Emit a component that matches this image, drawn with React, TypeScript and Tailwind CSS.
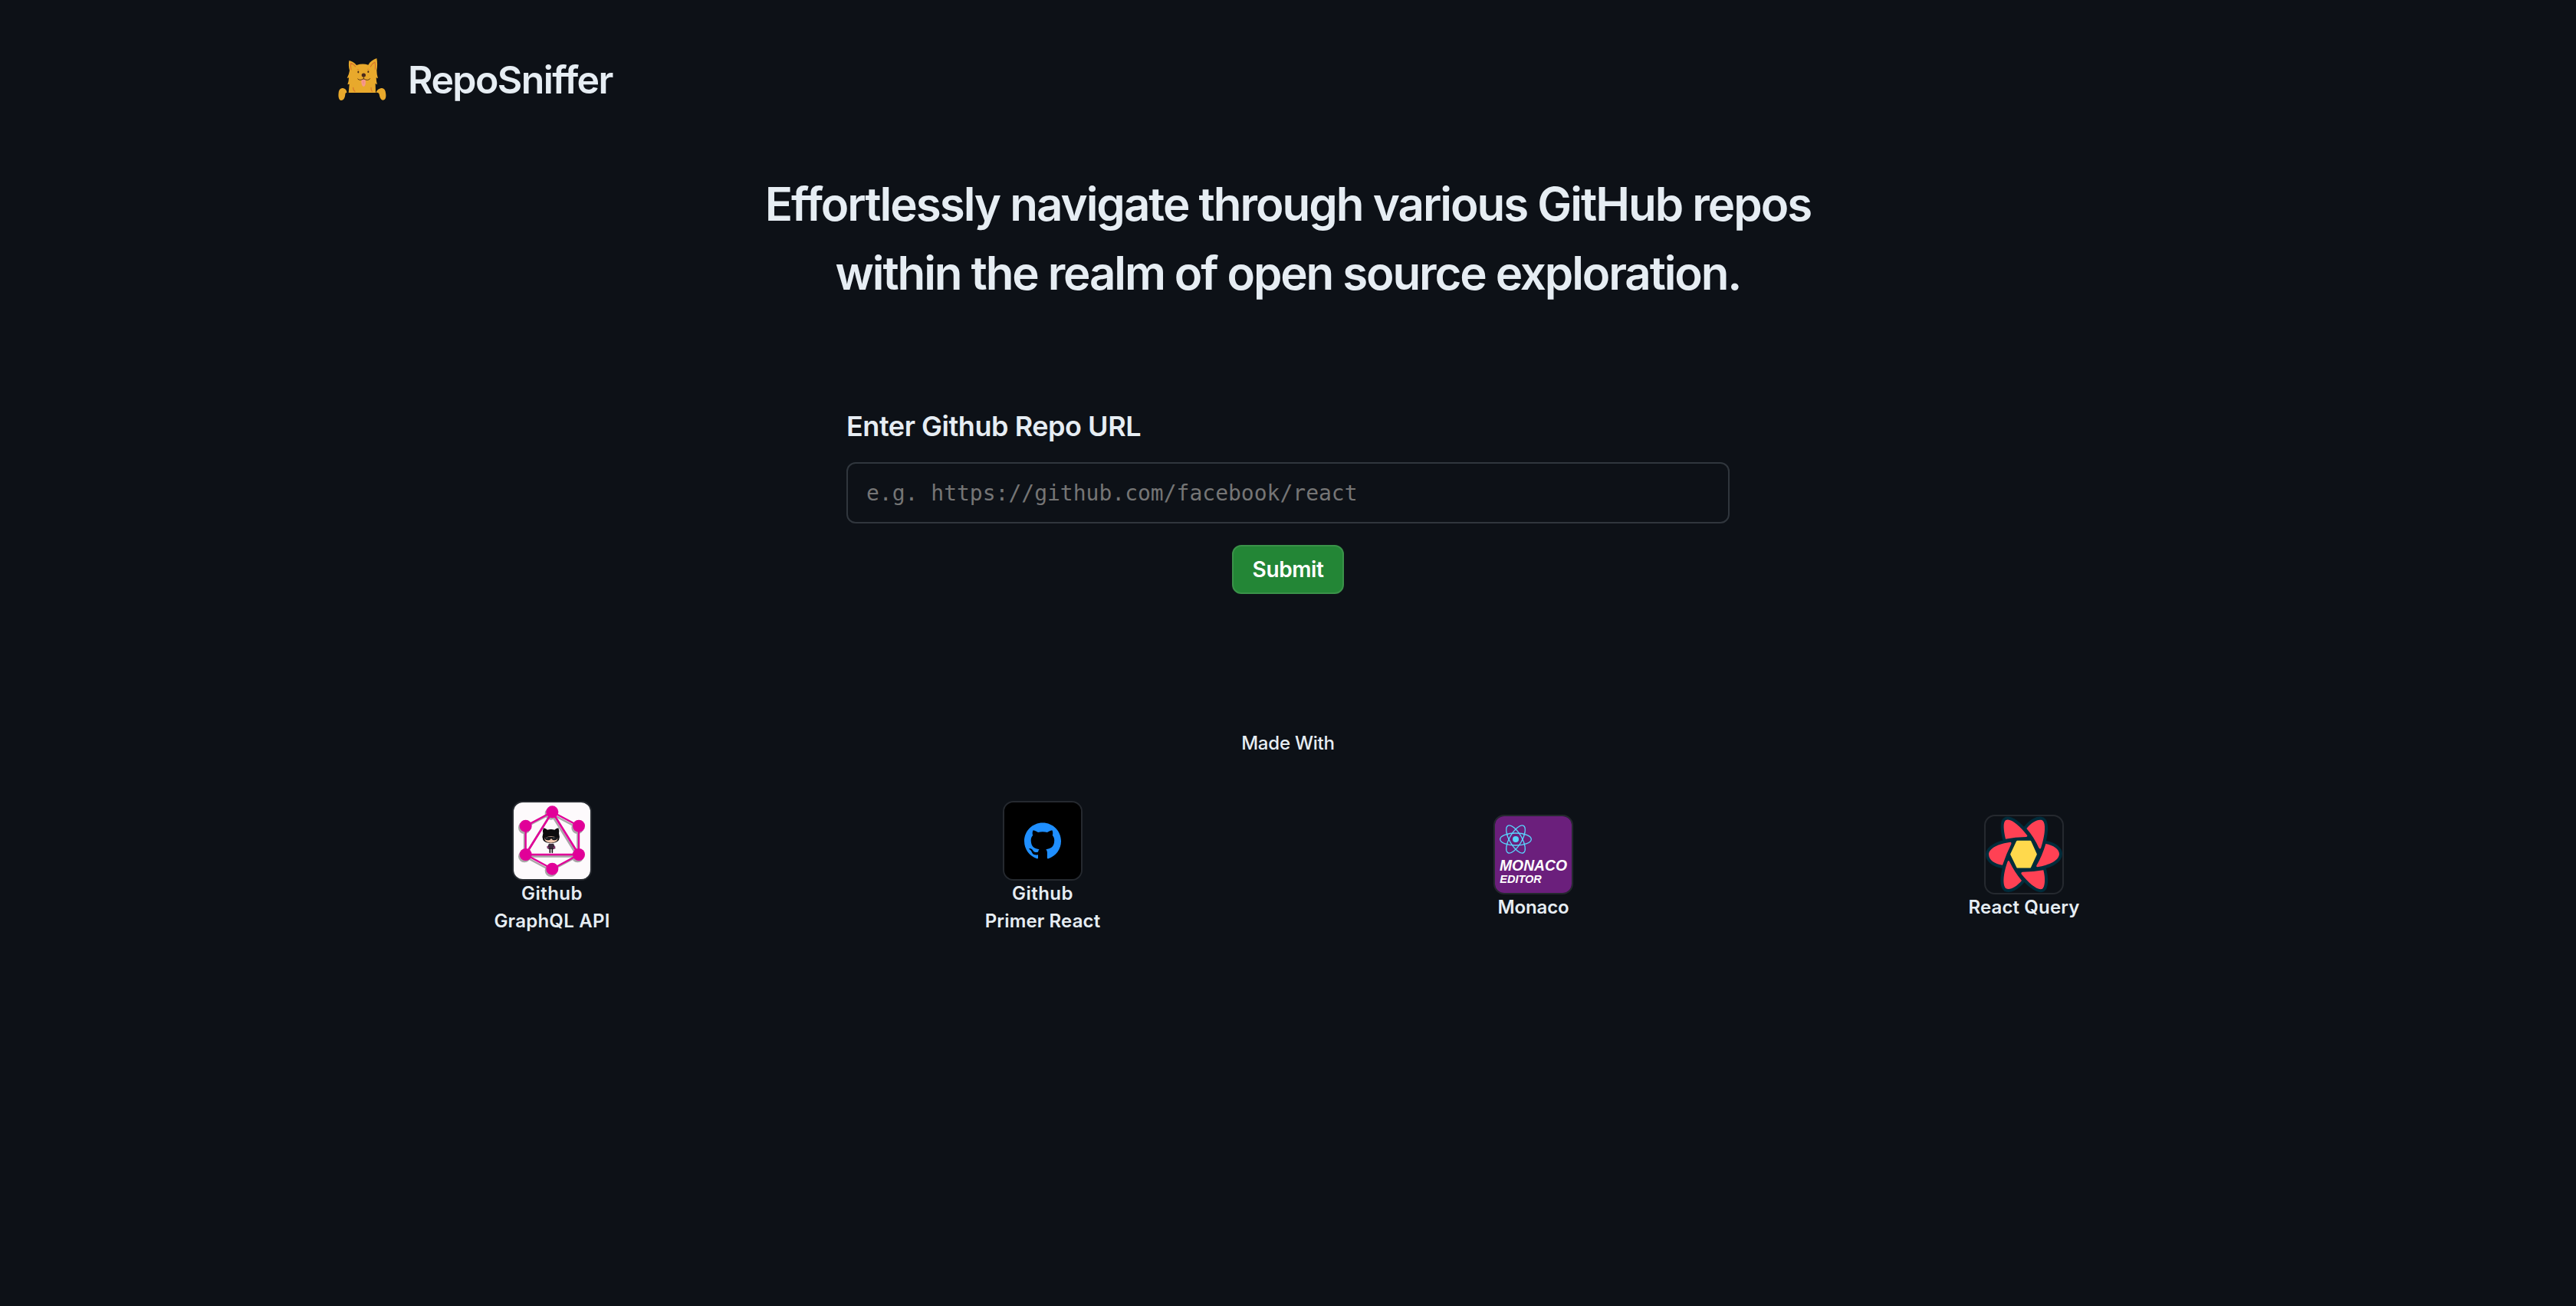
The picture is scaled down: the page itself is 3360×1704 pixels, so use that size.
import React from "react";

function DogLogo() {
  return (
    <svg viewBox="0 0 216 204" className="h-[68px] w-[72px]" aria-hidden="true">
      <g fill="#e8a92c">
        <path d="M58 27C67 29 80 35 87 45Q111 37 133 44C139 32 152 23 166 18C169 34 169 50 166 65Q166 82 171 97L164 94Q164 108 168 121L161 117L162 153H56L59 119L52 121Q57 108 57 94L50 96Q58 80 60 66C56 52 56 39 58 27Z" />
        <path d="M17 153C18 141 25 135 33 135C44 136 50 145 49 154C45 152 44 155 43 159C42 171 38 183 27 183C17 182 15 167 17 153Z" />
        <path d="M201 153C200 141 193 135 185 135C174 136 166 144 163 153C170 150 175 154 176 159C178 171 182 182 191 182C202 181 204 167 201 153Z" />
      </g>
      <g fill="none" stroke="#d9722b" strokeWidth="3.2" strokeLinecap="round" strokeLinejoin="round">
        <path d="M66 63Q63 48 65 37Q77 42 83 51" />
        <path d="M160 61Q162 43 159 33Q147 39 142 51" />
        <path d="M74 133Q74 144 81 148" />
        <path d="M144 133Q143 140 148 148" />
        <path d="M90 62Q93 60 96 62" strokeWidth="2" />
        <path d="M130 61Q133 59 136 62" strokeWidth="2" />
      </g>
      <path d="M106 101H122Q125 127 115 129Q105 127 106 101Z" fill="#f7988c" />
      <path d="M114 106V118" stroke="#e87c74" strokeWidth="1.8" />
      <path d="M92 99Q100 108 115 98Q131 109 140 98M115 90V99" fill="none" stroke="#4a2a14" strokeWidth="2.6" strokeLinecap="round" />
      <ellipse cx="115" cy="84" rx="8" ry="7.5" fill="#4a2a1c" />
      <ellipse cx="94" cy="72" rx="3" ry="4.2" fill="#4a2a14" />
      <ellipse cx="133" cy="71" rx="3" ry="4.2" fill="#4a2a14" />
    </svg>
  );
}

function GraphQLLogo() {
  const nodes = [
    [271, 88],
    [167, 143],
    [375, 143],
    [167, 255],
    [375, 255],
    [271, 311],
  ];
  const shape = (
    <>
      <path d="M271 88L167 143V255L271 311L375 255V143Z" fill="none" strokeWidth="7" />
      <path d="M271 88L167 255H375Z" fill="none" strokeWidth="8" />
      {nodes.map(([x, y]) => (
        <circle key={`${x}-${y}`} cx={x} cy={y} r="24" stroke="none" />
      ))}
    </>
  );
  return (
    <svg viewBox="120 51 300 300" className="size-full bg-[#fdfafc]" aria-hidden="true">
      <g transform="translate(-5 7)" fill="#8d8a8c" stroke="#8d8a8c" opacity="0.75" className="blur-[1px]">
        {shape}
      </g>
      <g fill="#e10098" stroke="#e10098">
        {shape}
      </g>
      <path d="M258 212H276L284 230L276 234H257L250 229Z" fill="#3a2a3c" />
      <path d="M251 222L257 231M282 222L276 231" stroke="#a3367e" strokeWidth="4" />
      <path d="M262 232V247M271 232V247" stroke="#1a1418" strokeWidth="5" strokeLinecap="round" />
      <path d="M237 151Q247 153 252 158Q266 154 280 158Q287 152 295 151Q300 163 297 172Q302 186 297 198Q288 210 266 210Q243 210 235 198Q230 186 235 172Q232 161 237 151Z" fill="#0c0b0d" />
      <path d="M241 190Q266 178 292 190Q294 207 266 209Q239 207 241 190Z" fill="#f3c9b0" />
      <path d="M240 186H293L290 195Q283 201 272 197L267 192L262 197Q250 201 243 195Z" fill="#15161a" />
      <path d="M246 190L254 189M273 190L281 189" stroke="#7d8086" strokeWidth="2" />
    </svg>
  );
}

function PrimerLogo() {
  return (
    <div className="flex size-full items-center justify-center bg-black">
      <svg viewBox="0 0 24 24" className="size-12" fill="#1f8fff" aria-hidden="true">
        <path d="M12 .297c-6.63 0-12 5.373-12 12 0 5.303 3.438 9.8 8.205 11.385.6.113.82-.258.82-.577 0-.285-.01-1.04-.015-2.04-3.338.724-4.042-1.61-4.042-1.61C4.422 18.07 3.633 17.7 3.633 17.7c-1.087-.744.084-.729.084-.729 1.205.084 1.838 1.236 1.838 1.236 1.07 1.835 2.809 1.305 3.495.998.108-.776.417-1.305.76-1.605-2.665-.3-5.466-1.332-5.466-5.93 0-1.31.465-2.38 1.235-3.22-.135-.303-.54-1.523.105-3.176 0 0 1.005-.322 3.3 1.23.96-.267 1.98-.399 3-.405 1.02.006 2.04.138 3 .405 2.28-1.552 3.285-1.23 3.285-1.23.645 1.653.24 2.873.12 3.176.765.84 1.23 1.91 1.23 3.22 0 4.61-2.805 5.625-5.475 5.92.42.36.81 1.096.81 2.22 0 1.606-.015 2.896-.015 3.286 0 .315.21.69.825.57C20.565 22.092 24 17.592 24 12.297c0-6.627-5.373-12-12-12" />
      </svg>
    </div>
  );
}

function MonacoLogo() {
  return (
    <svg viewBox="120 75 300 300" className="size-full bg-[#6b1f7c]" aria-hidden="true">
      <g fill="none" stroke="#58d3fb" strokeWidth="4">
        <ellipse cx="201" cy="165" rx="61" ry="24" />
        <ellipse cx="201" cy="165" rx="61" ry="24" transform="rotate(60 201 165)" />
        <ellipse cx="201" cy="165" rx="61" ry="24" transform="rotate(120 201 165)" />
      </g>
      <circle cx="201" cy="165" r="12" fill="#58d3fb" />
      <g fill="#fff" className="font-['Liberation_Sans',sans-serif] font-bold italic">
        <text x="138" y="287" fontSize="58">
          MONACO
        </text>
        <text x="139" y="336" fontSize="43.5">
          EDITOR
        </text>
      </g>
    </svg>
  );
}

const petals =
  "M228 164C220 130 217 100 228 91C245 80 282 110 313 151Q314 156 308 156Q265 156 228 164Z" +
  "M310 123C330 97 355 85 370 90C388 98 383 150 366 200Q362 205 358 199Q340 158 310 123Z" +
  "M385 183C415 188 438 205 438 222C438 248 400 266 352 274Q346 273 349 268Q372 228 385 183Z" +
  "M376 286C385 320 382 352 372 359C355 367 320 340 289 300Q288 294 294 293Q338 293 376 286Z" +
  "M237 250Q241 248 243 252Q262 292 291 327C270 352 245 365 230 358C214 347 219 295 237 250Z" +
  "M248 176Q252 178 250 184Q231 222 216 266C185 262 162 245 162 224C163 200 200 182 248 176Z";

function ReactQueryLogo() {
  return (
    <svg viewBox="150 75 300 300" className="size-full" aria-hidden="true">
      <path d={petals} fill="#002c3b" stroke="#002c3b" strokeWidth="24" strokeLinejoin="round" />
      <circle cx="300" cy="224" r="69" fill="#002c3b" />
      <path d={petals} fill="#ff4154" />
      <path d="M251 224L274 175H324L346 224L323 273H275Z" fill="#ffd94c" stroke="#ffd94c" strokeWidth="9" strokeLinejoin="round" />
    </svg>
  );
}

function Tool({ logo, children }: { logo: React.ReactNode; children: React.ReactNode }) {
  return (
    <div className="flex flex-col items-center">
      <div className="size-[104px] overflow-hidden rounded-[14px] border-2 border-[#25292f]">{logo}</div>
      <div className="-mt-px -mb-px text-center text-2xl/9 font-semibold">{children}</div>
    </div>
  );
}

export default function App() {
  return (
    <div className="flex min-h-screen flex-col items-center bg-[#0d1117] font-[Inter,sans-serif] text-[#e6edf3]">
      <header className="flex w-[2560px] items-center gap-6 pt-[70px] pl-9">
        <DogLogo />
        <span className="text-[50px]/[60px] font-semibold tracking-[-1.6px]">RepoSniffer</span>
      </header>

      <h1 className="mt-[83px] text-center text-[60px]/[90px] font-semibold">
        <span className="block tracking-[-2px]">Effortlessly navigate through various GitHub repos</span>
        <span className="block tracking-[-2.11px]">within the realm of open source exploration.</span>
      </h1>

      <form className="mt-32 flex w-[1152px] flex-col" onSubmit={(e) => e.preventDefault()}>
        <label htmlFor="repo" className="text-4xl/[54px] font-semibold tracking-[-0.46px]">
          Enter Github Repo URL
        </label>
        <input
          id="repo"
          placeholder="e.g. https://github.com/facebook/react"
          className="mt-5 h-20 rounded-xl border-2 border-[#30363d] bg-[#0d1117] px-6 font-['DejaVu_Sans_Mono',monospace] text-[28px] outline-none placeholder:text-[#757575]"
        />
        <button className="mt-7 flex h-16 w-[146px] items-center justify-center self-center rounded-xl border-2 border-[#3a9249] bg-[#238636] text-[28px] font-semibold tracking-[-0.41px] text-white">
          Submit
        </button>
      </form>

      <p className="mt-[177px] text-2xl/9 font-medium tracking-[-0.22px]">Made With</p>

      <section className="mt-[57px] grid w-[2560px] grid-cols-4 items-center">
        <Tool logo={<GraphQLLogo />}>
          <span className="block tracking-[0.45px]">Github</span>
          <span className="block tracking-[0.25px]">GraphQL API</span>
        </Tool>
        <Tool logo={<PrimerLogo />}>
          <span className="block tracking-[0.45px]">Github</span>
          <span className="block tracking-[0.14px]">Primer React</span>
        </Tool>
        <Tool logo={<MonacoLogo />}>
          <span className="block tracking-[-0.1px]">Monaco</span>
        </Tool>
        <Tool logo={<ReactQueryLogo />}>
          <span className="block tracking-[0.14px]">React Query</span>
        </Tool>
      </section>
    </div>
  );
}
